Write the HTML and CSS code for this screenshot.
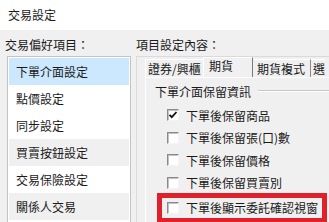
FILE: index.html
```html
<!DOCTYPE html>
<html lang="zh-Hant">
<head>
    <meta charset="UTF-8">
    <title>交易設定</title>
    <link rel="stylesheet" href="styles.css">
</head>
<body>
    <div class="titlebar">交易設定</div>
    <div class="main">
        <div class="left">
            <div class="section-label">交易偏好項目：</div>
            <ul class="pref-list">
                <li class="selected">下單介面設定</li>
                <li>點價設定</li>
                <li>同步設定</li>
                <li class="shaded">買賣按鈕設定</li>
                <li>交易保險設定</li>
                <li class="shaded">關係人交易</li>
            </ul>
        </div>
        <div class="right">
            <div class="section-label">項目設定內容：</div>
            <div class="panel">
                <div class="tabs">
                    <div class="tab tab-first">證券/興櫃</div>
                    <div class="tab active">期貨</div>
                    <div class="tab tab-third">期貨複式</div>
                    <div class="tab tab-last">選</div>
                </div>
                <div class="tab-body">
                    <div class="group-title">
                        <span>下單介面保留資訊</span>
                        <div class="rule"></div>
                    </div>
                    <div class="check-row">
                        <span class="box"><svg width="10" height="10" viewBox="0 0 10 10"><polyline points="1.5,4.8 3.8,7.2 8.5,2" fill="none" stroke="#111" stroke-width="1.8"/></svg></span>
                        下單後保留商品
                    </div>
                    <div class="check-row"><span class="box"></span>下單後保留張(口)數</div>
                    <div class="check-row"><span class="box"></span>下單後保留價格</div>
                    <div class="check-row"><span class="box"></span>下單後保留買賣別</div>
                    <div class="check-row marked"><span class="box"></span>下單後顯示委託確認視窗</div>
                </div>
            </div>
        </div>
    </div>
</body>
</html>
```

FILE: styles.css
```css
body {
    margin: 0;
    width: 329px;
    height: 222px;
    overflow: hidden;
    background-color: #f0f0f0;
    font-family: "Noto Sans CJK TC", "Noto Sans", sans-serif;
    font-size: 12px;
    color: #1a1a1a;
}

.titlebar {
    height: 30px;
    line-height: 30px;
    padding-left: 8px;
    background-color: white;
}

.main {
    display: flex;
    height: 192px;
    overflow: hidden;
}

.left {
    width: 136px;
    flex-shrink: 0;
}

.section-label {
    padding: 4px 0 0 5px;
    height: 22px;
    line-height: 22px;
    white-space: nowrap;
}

.right .section-label {
    padding-left: 0;
}

.pref-list {
    list-style: none;
    margin: 0 0 0 7px;
    padding: 1px 1px 0;
    width: 120px;
    height: 165px;
    overflow: hidden;
    background-color: white;
    border: 1px solid #c4c4c4;
    border-bottom: none;
}

.pref-list li {
    height: 27px;
    line-height: 27px;
    padding-left: 7px;
    white-space: nowrap;
}

.pref-list .selected {
    background-color: #cce8ff;
}

.pref-list .shaded {
    background-color: #f0f0f0;
}

.right {
    width: 193px;
    overflow: hidden;
}

.panel {
    border-left: 1px solid #dadada;
    border-top: 1px solid #dadada;
    padding-left: 8px;
    height: 165px;
}

.tabs {
    display: flex;
    align-items: flex-end;
    height: 20px;
    white-space: nowrap;
}

.tab {
    height: 18px;
    line-height: 18px;
    box-sizing: border-box;
    border-top: 1px solid white;
    flex-shrink: 0;
}

.tab-first {
    width: 58px;
    padding-left: 2px;
    border-left: 1px solid white;
}

.tab.active {
    width: 50px;
    height: 20px;
    line-height: 16px;
    padding-left: 5px;
    border-left: 1px solid white;
    border-right: 1px solid #7a7a7a;
}

.tab-third {
    width: 58px;
    padding-left: 4px;
    border-right: 1px solid #8a8a8a;
}

.tab-last {
    padding-left: 2px;
}

.tab-body {
    border-left: 1px solid white;
    border-top: 1px solid white;
    height: 144px;
}

.group-title {
    display: flex;
    align-items: center;
    height: 26px;
    padding-left: 9px;
}

.group-title .rule {
    flex: 1;
    margin-left: 7px;
    border-top: 1px solid #c6c6c6;
    border-bottom: 1px solid white;
}

.check-row {
    display: flex;
    align-items: center;
    width: 155px;
    height: 22.5px;
    margin-left: 16px;
    padding-left: 5px;
    white-space: nowrap;
}

.box {
    width: 12px;
    height: 12px;
    box-sizing: border-box;
    margin-right: 7px;
    background-color: white;
    border: 1px solid;
    border-color: #8a8a8a #f4f4f4 #f4f4f4 #8a8a8a;
    box-shadow: inset 1px 1px 0 #c2c2c2;
    display: flex;
    align-items: center;
    justify-content: center;
}

.check-row.marked {
    height: 20px;
    margin-top: 3.5px;
    outline: 5px solid #e0212b;
}
```
